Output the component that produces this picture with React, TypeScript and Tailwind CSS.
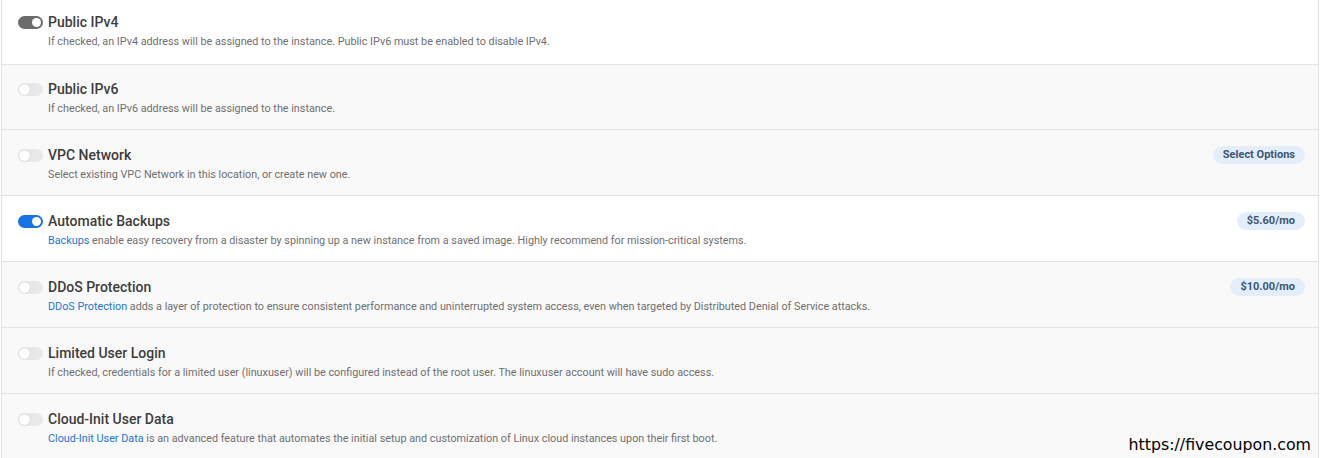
import React from "react"

type Opt = {
  title: string
  desc: React.ReactNode
  on?: "gray" | "blue"
  badge?: string
}

const Link = ({ children }: { children: React.ReactNode }) => (
  <span className="text-[#1c74d8]">{children}</span>
)

const Toggle = ({ on }: { on?: "gray" | "blue" }) => {
  const track = on === "blue" ? "bg-[#1573e6]" : on === "gray" ? "bg-[#6b6b6b]" : "bg-[#e8e8e8]"
  return (
    <div className={`relative w-[25px] h-[13px] rounded-full shrink-0 ${track}`}>
      <div
        className={`absolute rounded-full bg-white ${
          on ? "top-[2px] right-[2px] w-[9px] h-[9px]" : "top-[1px] left-[1px] w-[11px] h-[11px] shadow-[0_0_1px_rgba(0,0,0,0.3)]"
        }`}
      />
    </div>
  )
}

const options: Opt[] = [
  {
    title: "Public IPv4",
    desc: "If checked, an IPv4 address will be assigned to the instance. Public IPv6 must be enabled to disable IPv4.",
    on: "gray",
  },
  { title: "Public IPv6", desc: "If checked, an IPv6 address will be assigned to the instance." },
  {
    title: "VPC Network",
    desc: "Select existing VPC Network in this location, or create new one.",
    badge: "Select Options",
  },
  {
    title: "Automatic Backups",
    desc: (
      <>
        <Link>Backups</Link> enable easy recovery from a disaster by spinning up a new instance from a saved image. Highly
        recommend for mission-critical systems.
      </>
    ),
    on: "blue",
    badge: "$5.60/mo",
  },
  {
    title: "DDoS Protection",
    desc: (
      <>
        <Link>DDoS Protection</Link> adds a layer of protection to ensure consistent performance and uninterrupted system
        access, even when targeted by Distributed Denial of Service attacks.
      </>
    ),
    badge: "$10.00/mo",
  },
  {
    title: "Limited User Login",
    desc: "If checked, credentials for a limited user (linuxuser) will be configured instead of the root user. The linuxuser account will have sudo access.",
  },
  {
    title: "Cloud-Init User Data",
    desc: (
      <>
        <Link>Cloud-Init User Data</Link> is an advanced feature that automates the initial setup and customization of
        Linux cloud instances upon their first boot.
      </>
    ),
  },
]

const Row = ({ o, i }: { o: Opt; i: number }) => (
  <div
    className={`flex items-start justify-between border-b border-[#e2e2e2] pl-[16px] pr-[13px] ${
      i === 0 ? "h-[65px] pt-[12px]" : i === 1 ? "h-[65px] pt-[14px]" : "h-[66px] pt-[15px]"
    } ${o.on ? "bg-white" : "bg-[#f9f9f9]"}`}
  >
    <div className="flex flex-col">
      <div className="flex items-center gap-[6px] h-[20px]">
        <Toggle on={o.on} />
        <span className="-ml-px text-[14px] font-medium text-[#3d3d3d] leading-none">{o.title}</span>
      </div>
      <p className="pl-[30px] mt-[2px] text-[10.8px] text-[#6f6f6f] leading-[16px]">{o.desc}</p>
    </div>
    {o.badge && (
      <span className="mt-[1px] rounded-full bg-[#e4eefa] px-[10px] h-[18px] flex items-center text-[11px] font-bold text-[#3a5676]">
        {o.badge}
      </span>
    )}
  </div>
)

export default function App() {
  return (
    <div className="relative w-[1321px] h-[458px] overflow-hidden bg-white font-['Roboto',sans-serif]">
      <div className="ml-px w-[1318px] border-x border-[#e2e2e2]">
        {options.map((o, i) => (
          <Row key={o.title} o={o} i={i} />
        ))}
      </div>
      <div className="absolute right-[9px] bottom-[3px] px-[1px] text-[15.8px] text-black font-['DejaVu_Sans',sans-serif] leading-[20px]">
        https://fivecoupon.com
      </div>
    </div>
  )
}
